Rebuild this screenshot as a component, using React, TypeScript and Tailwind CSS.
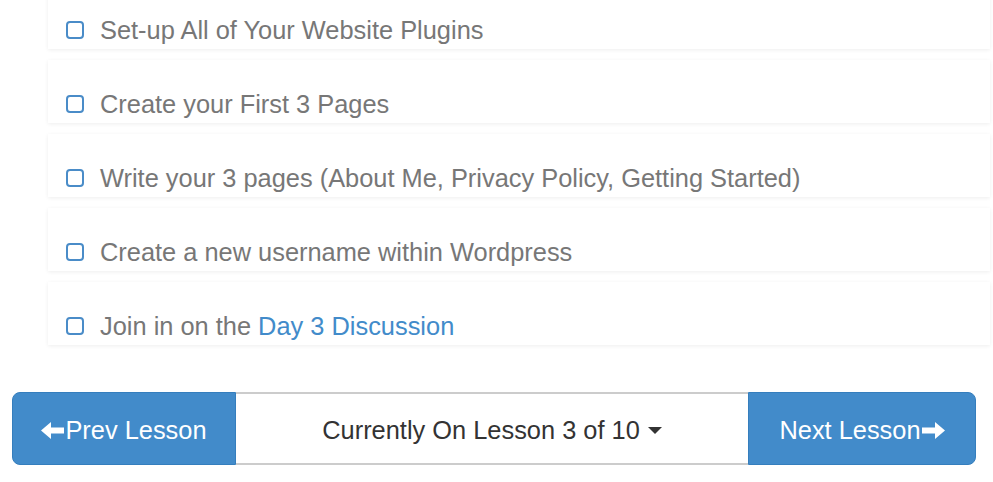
import React from "react";

const items: React.ReactNode[] = [
  "Set-up All of Your Website Plugins",
  "Create your First 3 Pages",
  "Write your 3 pages (About Me, Privacy Policy, Getting Started)",
  "Create a new username within Wordpress",
  <>
    Join in on the <span className="text-[#428bca]">Day 3 Discussion</span>
  </>,
];

function ArrowLeft() {
  return (
    <svg width="23" height="19" viewBox="0 0 23 19" className="inline-block mr-[1px]">
      <path d="M0 9.5 L10 1 L10 6.5 L23 6.5 L23 12.5 L10 12.5 L10 18 Z" fill="white" />
    </svg>
  );
}
function ArrowRight() {
  return (
    <svg width="23" height="19" viewBox="0 0 23 19" className="inline-block ml-[1px]">
      <path d="M23 9.5 L13 1 L13 6.5 L0 6.5 L0 12.5 L13 12.5 L13 18 Z" fill="white" />
    </svg>
  );
}

export default function App() {
  return (
    <div
      className="w-[993px] h-[482px] overflow-hidden bg-white"
      style={{ fontFamily: '"Liberation Sans", Arial, sans-serif' }}
    >
      <div className="flex flex-col gap-[11px] pl-[48px] pr-[3px] -mt-[14px]">
        {items.map((it, i) => (
          <div
            key={i}
            className="h-[63px] bg-white shadow-[0_1px_4px_rgba(0,0,0,0.07)] flex items-start pt-[29px] pl-[18px]"
          >
            <div className="w-[18px] h-[18px] mt-[6px] border-2 border-[#4a8cc8] rounded-[4px] shrink-0" />
            <div className="ml-[16px] text-[25.4px] leading-[30px] text-[#777777] whitespace-nowrap">{it}</div>
          </div>
        ))}
      </div>
      <div className="flex mt-[47px] ml-[12px] h-[73px] w-[964px]">
        <div className="w-[224px] pt-[3px] bg-[#428bca] border border-[#357ebd] rounded-l-[8px] flex items-center justify-center text-white text-[25.4px]">
          <ArrowLeft />
          <span>Prev Lesson</span>
        </div>
        <div className="flex-1 pt-[3px] bg-white border-y-2 border-[#cccccc] flex items-center justify-center text-[25.4px] text-[#333333]">
          <span>Currently On Lesson 3 of 10</span>
          <svg width="14" height="8" viewBox="0 0 14 8" className="ml-[8px] mt-[2px]">
            <path d="M0 0 L14 0 L7 7 Z" fill="#333333" />
          </svg>
        </div>
        <div className="w-[228px] pt-[3px] bg-[#428bca] border border-[#357ebd] rounded-r-[8px] flex items-center justify-center text-white text-[25.4px]">
          <span>Next Lesson</span>
          <ArrowRight />
        </div>
      </div>
    </div>
  );
}
